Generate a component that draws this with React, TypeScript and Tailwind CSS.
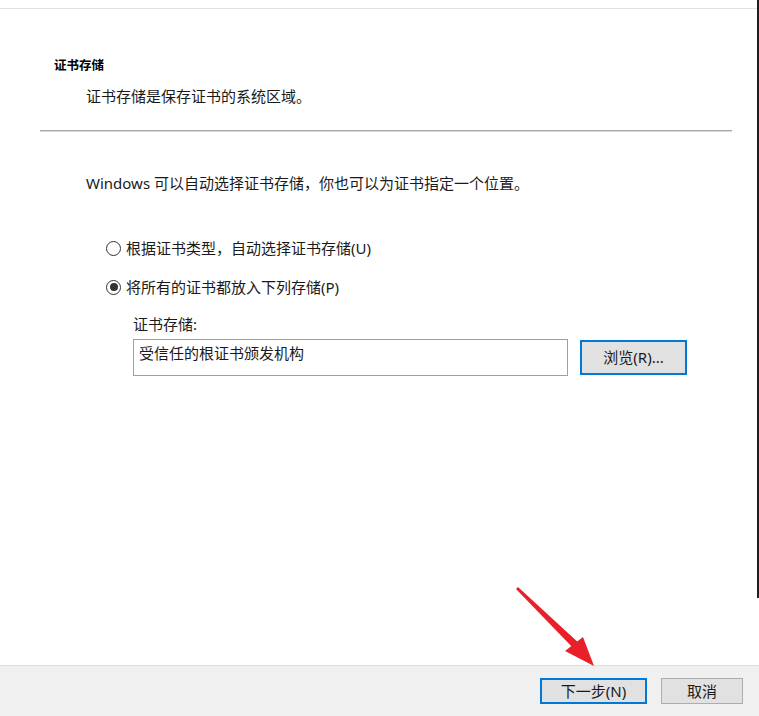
import React from "react";

function Radio({ checked }: { checked?: boolean }) {
  return (
    <span className="w-[15px] h-[15px] rounded-full border border-[#333333] bg-white flex items-center justify-center shrink-0">
      {checked && <span className="w-[8px] h-[8px] rounded-full bg-[#333333]" />}
    </span>
  );
}

export default function App() {
  return (
    <div className="relative w-[759px] h-[716px] bg-white flex flex-col overflow-hidden text-[#1a1a1a] font-['Noto_Sans','Noto_Sans_CJK_SC',sans-serif]">
      <div className="h-[8px] shrink-0" />
      <div className="h-px w-[757px] bg-[#e3e3e3] shrink-0" />
      <div className="flex-1 flex flex-col">
        <div className="mt-[49px] ml-[54px] text-[12.5px] font-bold leading-[16px] text-black">证书存储</div>
        <div className="mt-[12px] ml-[86px] text-[15px] leading-[20px]">证书存储是保存证书的系统区域。</div>
        <div className="mt-[24px] ml-[40px] w-[692px] h-[2px] bg-[#d9d9d9] border-t border-[#a8a8a8]" />
        <div className="mt-[41px] ml-[86px] text-[15px] leading-[20px]">
          Windows 可以自动选择证书存储，你也可以为证书指定一个位置。
        </div>
        <div className="mt-[45px] ml-[106px] h-[20px] flex items-center gap-[5px] text-[15px] leading-[20px]">
          <Radio />
          <span>根据证书类型，自动选择证书存储(U)</span>
        </div>
        <div className="mt-[19px] ml-[106px] h-[20px] flex items-center gap-[5px] text-[15px] leading-[20px]">
          <Radio checked />
          <span>将所有的证书都放入下列存储(P)</span>
        </div>
        <div className="mt-[18px] ml-[133px] text-[15px] leading-[18px]">证书存储:</div>
        <div className="mt-[6px] ml-[133px] flex items-start gap-[12px]">
          <div className="w-[435px] h-[37px] border border-[#a0a0a0] bg-white pl-[5px] pt-[3px] text-[15px] leading-[20px]">
            受信任的根证书颁发机构
          </div>
          <div className="mt-px w-[107px] h-[35px] border-2 border-[#0078d7] bg-[#e1e1e1] flex items-center justify-center text-[15px]">
            浏览(R)...
          </div>
        </div>
      </div>
      <div className="h-[51px] shrink-0 border-t border-[#dfdfdf] bg-[#f0f0f0] flex justify-end items-start pt-[12px] pr-[16px] gap-[14px]">
        <div className="w-[107px] h-[26px] border-2 border-[#0078d7] bg-[#e1e1e1] flex items-center justify-center text-[15px] leading-[20px]">
          下一步(N)
        </div>
        <div className="w-[82px] h-[26px] border border-[#adadad] bg-[#e1e1e1] flex items-center justify-center text-[15px] leading-[20px]">
          取消
        </div>
      </div>
      <div className="absolute right-0 top-0 w-[2px] h-[598px] bg-[#1f1f1f]" />
      <svg className="absolute left-0 top-0 pointer-events-none" width="759" height="716" viewBox="0 0 759 716">
        <polygon points="516,589 518,587 581,645 576,651" fill="#e8202a" />
        <polygon points="594,666 565,651 583,637" fill="#e8202a" />
      </svg>
    </div>
  );
}
